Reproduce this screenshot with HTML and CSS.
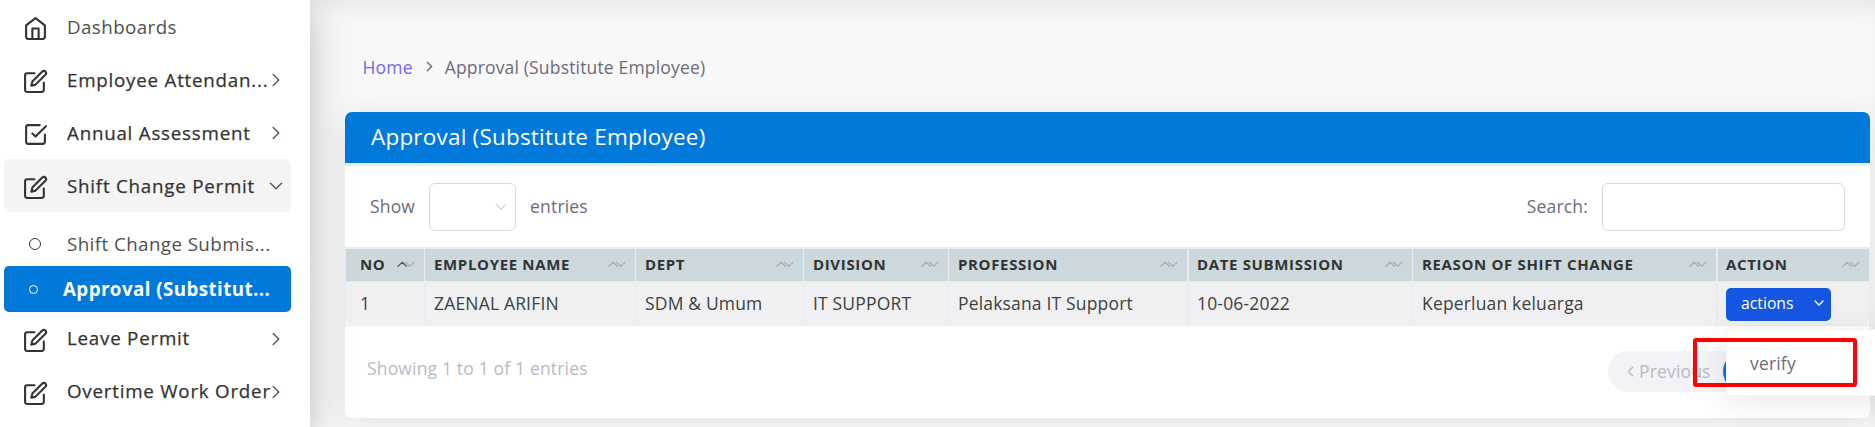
FILE: index.html
```html
<!DOCTYPE html>
<html lang="en">
<head>
<meta charset="utf-8">
<title>Approval (Substitute Employee)</title>
<link rel="stylesheet" href="styles.css">
</head>
<body>
<svg class="defs" aria-hidden="true">
  <symbol id="edit" viewBox="0 0 24 24"><path d="M11 4H4a2 2 0 0 0-2 2v14a2 2 0 0 0 2 2h14a2 2 0 0 0 2-2v-7"/><path d="M18.500 2.500a2.121 2.121 0 0 1 3 3L12 15l-4 1 1-4 9.500-9.500z"/></symbol>
  <symbol id="home" viewBox="0 0 24 24"><path d="M3 9l9-7 9 7v11a2 2 0 0 1-2 2H5a2 2 0 0 1-2-2z"/><path d="M9 22V12h6v10"/></symbol>
  <symbol id="check" viewBox="0 0 24 24"><path d="M9 11l3 3L22 4"/><path d="M21 12v7a2 2 0 0 1-2 2H5a2 2 0 0 1-2-2V5a2 2 0 0 1 2-2h11"/></symbol>
  <symbol id="right" viewBox="0 0 24 24"><path d="M9 18l6-6-6-6"/></symbol>
  <symbol id="left" viewBox="0 0 24 24"><path d="M15 18l-6-6 6-6"/></symbol>
  <symbol id="down" viewBox="0 0 24 24"><path d="M6 9l6 6 6-6"/></symbol>
  <symbol id="sort" viewBox="0 0 18 8"><path class="asc" d="M1 6.300 5.300 2.200 9.300 6.300"/><path class="desc" d="M8.500 2.200 12.600 6.300 17 2.200"/></symbol>
</svg>
<div class="app">
  <nav class="sidebar">
    <a class="item plain"><svg class="icon"><use href="#home"/></svg><span>Dashboards</span></a>
    <a class="item"><svg class="icon"><use href="#edit"/></svg><span>Employee Attendan...</span><svg class="chev"><use href="#right"/></svg></a>
    <a class="item"><svg class="icon"><use href="#check"/></svg><span>Annual Assessment</span><svg class="chev"><use href="#right"/></svg></a>
    <a class="item open"><svg class="icon"><use href="#edit"/></svg><span>Shift Change Permit</span><svg class="chev"><use href="#down"/></svg></a>
    <a class="sub plain"><i class="dot"></i><span>Shift Change Submis...</span></a>
    <a class="sub active"><i class="dot"></i><span>Approval (Substitut...</span></a>
    <a class="item"><svg class="icon"><use href="#edit"/></svg><span>Leave Permit</span><svg class="chev"><use href="#right"/></svg></a>
    <a class="item"><svg class="icon"><use href="#edit"/></svg><span>Overtime Work Order</span><svg class="chev"><use href="#right"/></svg></a>
  </nav>
  <main class="content">
    <div class="crumbs"><a>Home</a><svg><use href="#right"/></svg><span>Approval (Substitute Employee)</span></div>
    <section class="card">
      <header class="card-head"><h1>Approval (Substitute Employee)</h1></header>
      <div class="controls">
        <div class="length"><span>Show</span><div class="select"><svg><use href="#down"/></svg></div><span>entries</span></div>
        <label class="search"><span>Search:</span><input type="text"></label>
      </div>
      <div class="table">
        <div class="row head">
          <div class="sorted">No<svg><use href="#sort"/></svg></div>
          <div>Employee Name<svg><use href="#sort"/></svg></div>
          <div>Dept<svg><use href="#sort"/></svg></div>
          <div>Division<svg><use href="#sort"/></svg></div>
          <div>Profession<svg><use href="#sort"/></svg></div>
          <div>Date Submission<svg><use href="#sort"/></svg></div>
          <div>Reason Of Shift Change<svg><use href="#sort"/></svg></div>
          <div>Action<svg><use href="#sort"/></svg></div>
        </div>
        <div class="row data">
          <div>1</div><div>ZAENAL ARIFIN</div><div>SDM &amp; Umum</div><div>IT SUPPORT</div>
          <div>Pelaksana IT Support</div><div>10-06-2022</div><div>Keperluan keluarga</div>
          <div class="action"><button class="btn">actions<svg><use href="#down"/></svg></button>
            <div class="menu">verify</div><div class="mark"></div></div>
        </div>
      </div>
      <footer class="foot">
        <div class="info">Showing 1 to 1 of 1 entries</div>
        <div class="pager"><svg><use href="#left"/></svg><span>Previous</span><b class="page"></b></div>
      </footer>
    </section>
  </main>
</div>
</body>
</html>
```
FILE: styles.css
```css
* { box-sizing: border-box; }
body {
  margin: 0;
  height: 427px;
  overflow: hidden;
  font-family: "Open Sans", sans-serif;
  font-size: 17.5px;
  letter-spacing: .17px;
  color: #6e6b7b;
  background: #f8f8f8;
}
svg { fill: none; stroke: currentColor; stroke-width: 2; stroke-linecap: round; stroke-linejoin: round; flex: none; }
.defs { position: absolute; width: 0; height: 0; }
.app { display: flex; height: 427px; overflow: hidden; }

.sidebar {
  width: 310px;
  flex: none;
  position: relative;
  z-index: 1;
  padding: 0 19px 0 4px;
  background: #fff;
  color: #333;
  box-shadow: 0 10px 38px rgba(20, 40, 35, .26);
}
.item { display: flex; align-items: center; height: 53px; padding: 0 4px 0 19px; border-radius: 6px; }
.item span, .sub span { flex: 1; white-space: nowrap; font-weight: 500; font-size: 18.75px; letter-spacing: .77px; padding-bottom: 1px; -webkit-text-stroke: .25px currentColor; }
.item.plain span, .sub.plain span { font-weight: 400; letter-spacing: .42px; color: #505050; -webkit-text-stroke: 0; }
.icon { width: 25px; height: 25px; margin-right: 19px; position: relative; top: 2px; }
.chev { width: 22px; height: 22px; margin-left: -10px; stroke-width: 1.700; color: #5e5873; }
.open { background: #f4f4f4; margin-bottom: 9px; }
.sub { display: flex; align-items: center; height: 45px; padding-left: 25px; border-radius: 5px; }
.dot { width: 12px; height: 12px; border: 1.500px solid #333; border-radius: 50%; margin-right: 26px; }
.sub.active { height: 46px; background: #0079db; color: #fff; }
.sub.active span { font-weight: 700; letter-spacing: .42px; -webkit-text-stroke: 0; }
.sub.active ~ .item span { padding-bottom: 3px; }
.active .dot { width: 9px; height: 9px; border: 1px solid #fff; margin-right: 25px; }

.content { flex: 1; padding: 0 5px 0 35px; box-shadow: inset 0 15px 20px -8px rgba(0, 0, 0, .07); }
.crumbs { display: flex; align-items: center; height: 112px; padding: 21px 0 0 17.5px; }
.crumbs a { color: #7367f0; }
.crumbs svg { width: 17px; height: 17px; margin: 0 7px 0 8px; }

.card { height: 306px; border-radius: 7px; background: #fff; box-shadow: 0 5px 30px rgba(34, 50, 45, .1); }
.card-head { height: 54px; padding: 0 26px; background: #0079db; border-bottom: 3px solid #ebe9f1; border-radius: 7px 7px 0 0; }
h1 { margin: 0; font-size: 22.5px; line-height: 50px; letter-spacing: .2px; font-weight: 500; color: #fff; }
.controls { display: flex; justify-content: space-between; align-items: center; height: 81px; padding: 0 25px; line-height: 22px; }
.length, .search { display: flex; align-items: center; gap: 14px; }
.length span, .search span { padding-bottom: 2px; }
.select, input { height: 48px; border: 1px solid #d8d6de; border-radius: 6px; background: #fff; }
.select { width: 87px; display: flex; align-items: center; justify-content: flex-end; padding-right: 5px; color: #d8d6de; }
.select svg { width: 18px; height: 18px; }
input { width: 243px; }

.table { border: solid #ebe9f1; border-width: 2px 1px 1px; }
.row { display: grid; grid-template-columns: 78px 211px 168px 145px 239px 225px 304px 153px; }
.row > div { display: flex; align-items: center; padding: 0 9px 2px; border-left: 1px solid #ebe9f1; white-space: nowrap; }
.row > div:first-child { padding-left: 14px; border-left: 0; }
.row > div:nth-child(6), .row > div:nth-child(8) { border-left-width: 2px; padding-left: 8px; }
.head { height: 33px; background: #ccd8dc; border-bottom: 1px solid #ebe9f1; color: #333; font-size: 15px; font-weight: 700; letter-spacing: .65px; text-transform: uppercase; }
.head > div { justify-content: space-between; }
.head svg { width: 18px; height: 8px; color: #a9b0b9; stroke-width: 1.300; }
.asc { stroke: var(--asc, currentColor); }
.sorted { --asc: #5e5873; }
.data { height: 43px; background: #f0f0f3; color: #404040; border-radius: 0 0 6px 6px; }
.row > .action { position: relative; padding-bottom: 0; }
.btn { display: flex; align-items: center; justify-content: space-between; width: 105px; height: 33px; margin-top: 1px; padding: 0 4px 2px 15px; border: 0; border-radius: 5px; background: #1557e2; color: #fff; font: 500 15.750px "Open Sans", sans-serif; }
.btn svg { width: 16px; height: 16px; }
.menu { position: absolute; z-index: 2; left: 8px; top: 47px; width: 200px; height: 67px; padding-left: 23px; line-height: 66px; background: #fff; color: #6e6b7b; border: 1px solid rgba(34, 41, 47, .05); border-radius: 5px; box-shadow: 0 6px 31px rgba(34, 41, 47, .1); }
.mark { position: absolute; z-index: 3; left: -25px; top: 56px; width: 164px; height: 49px; border: 4px solid #f00; border-radius: 3px; }

.foot { display: flex; justify-content: space-between; padding: 25px 24px 0 22px; }
.info { padding-top: 5px; color: #b9b9c3; }
.pager { display: flex; align-items: center; width: 238px; height: 41px; padding-left: 14px; line-height: 22px; border-radius: 21px; background: #f3f2f7; color: #b9b9c3; }
.pager svg { width: 17px; height: 17px; }
.pager span { padding-bottom: 1px; }
.page { width: 41px; height: 41px; margin-left: 12px; border-radius: 50%; background: #0079db; }
```
